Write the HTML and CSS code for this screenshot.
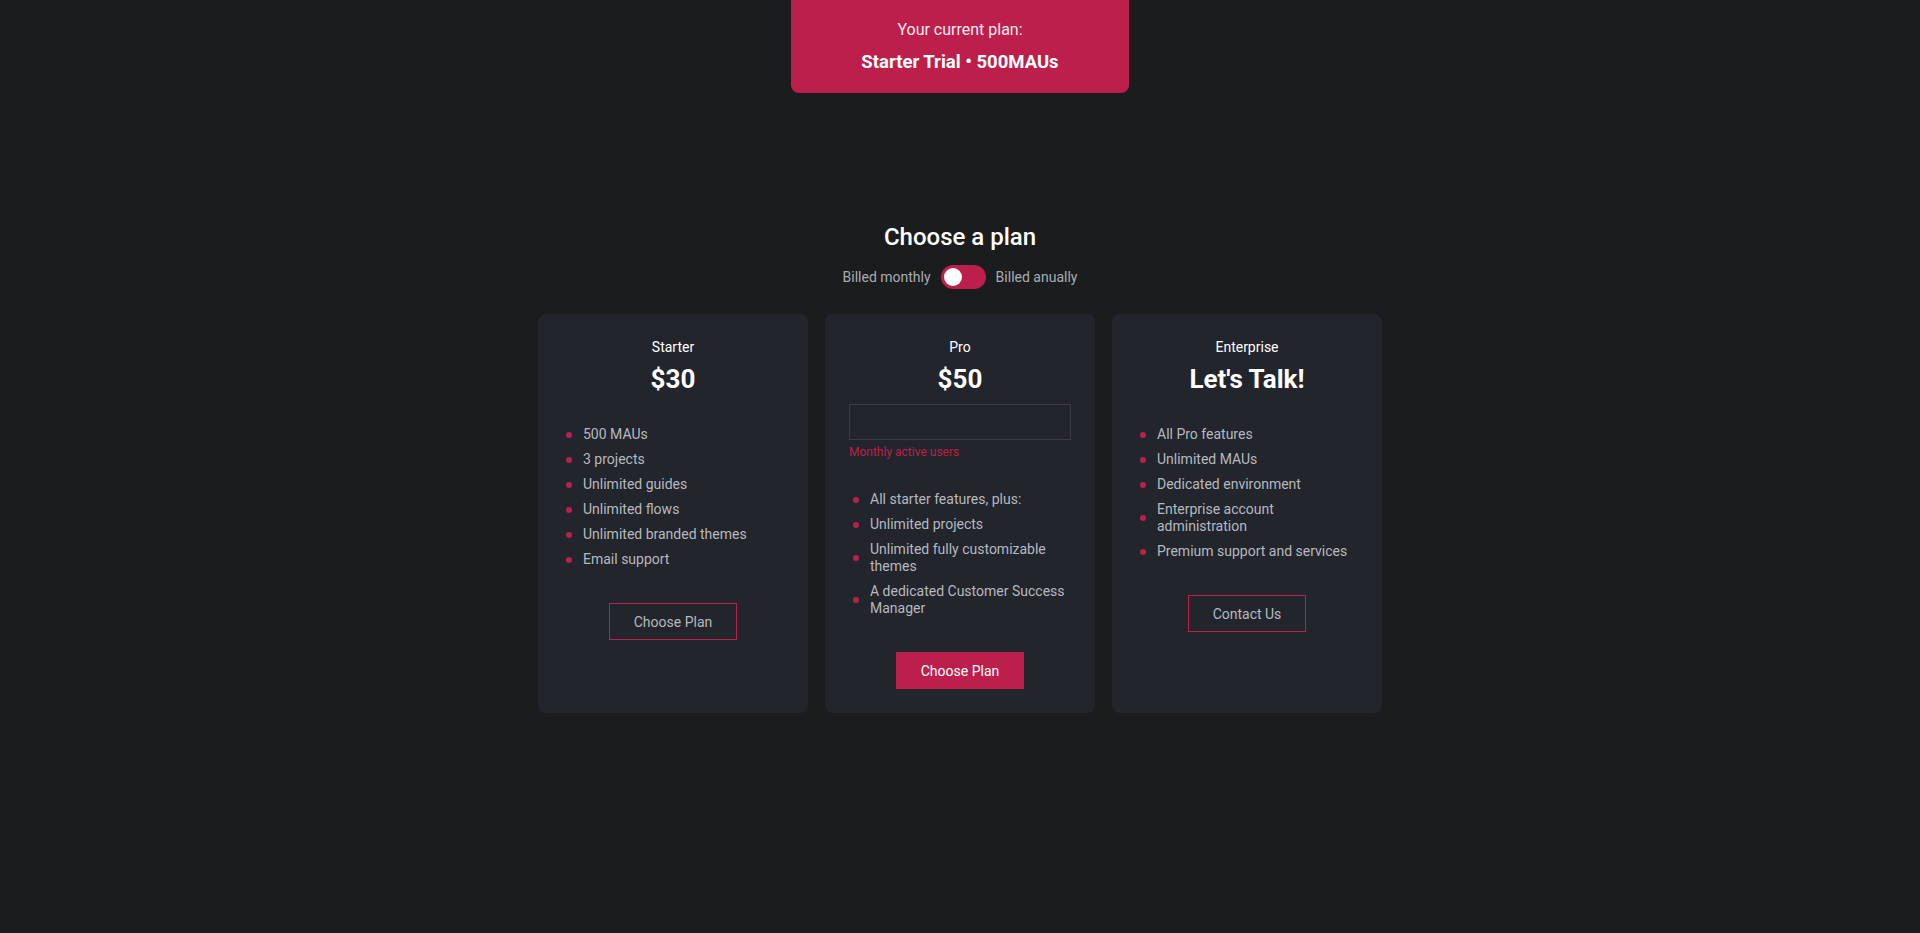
FILE: index.html
```html
<!DOCTYPE html>
<html lang="en">
<head>
<meta charset="utf-8">
<title>Plans</title>
<link rel="stylesheet" href="styles.css">
</head>
<body>
<div class="page">
  <div class="current-plan">
    <div class="current-label">Your current plan:</div>
    <div class="current-name">Starter Trial • 500MAUs</div>
  </div>

  <h1 class="heading">Choose a plan</h1>
  <div class="billing">
    <span class="billing-label">Billed monthly</span>
    <span class="toggle"><span class="knob"></span></span>
    <span class="billing-label">Billed anually</span>
  </div>

  <div class="cards">
    <div class="card">
      <div class="card-title">Starter</div>
      <div class="card-price">$30</div>
      <ul class="features">
        <li><span class="dot"></span><span>500 MAUs</span></li>
        <li><span class="dot"></span><span>3 projects</span></li>
        <li><span class="dot"></span><span>Unlimited guides</span></li>
        <li><span class="dot"></span><span>Unlimited flows</span></li>
        <li><span class="dot"></span><span>Unlimited branded themes</span></li>
        <li><span class="dot"></span><span>Email support</span></li>
      </ul>
      <button class="btn btn-outline">Choose Plan</button>
    </div>

    <div class="card">
      <div class="card-title">Pro</div>
      <div class="card-price">$50</div>
      <div class="mau-input"></div>
      <div class="mau-label">Monthly active users</div>
      <ul class="features">
        <li><span class="dot"></span><span>All starter features, plus:</span></li>
        <li><span class="dot"></span><span>Unlimited projects</span></li>
        <li><span class="dot"></span><span>Unlimited fully customizable themes</span></li>
        <li><span class="dot"></span><span>A dedicated Customer Success Manager</span></li>
      </ul>
      <button class="btn btn-filled">Choose Plan</button>
    </div>

    <div class="card">
      <div class="card-title">Enterprise</div>
      <div class="card-price">Let's Talk!</div>
      <ul class="features">
        <li><span class="dot"></span><span>All Pro features</span></li>
        <li><span class="dot"></span><span>Unlimited MAUs</span></li>
        <li><span class="dot"></span><span>Dedicated environment</span></li>
        <li><span class="dot"></span><span>Enterprise account administration</span></li>
        <li><span class="dot"></span><span>Premium support and services</span></li>
      </ul>
      <button class="btn btn-outline btn-contact">Contact Us</button>
    </div>
  </div>
</div>
</body>
</html>
```

FILE: styles.css
```css
html, body {
  margin: 0;
  padding: 0;
  background: #1b1c1e;
  font-family: Roboto, "Liberation Sans", Arial, sans-serif;
  color: #f2f2f2;
}

.page {
  display: flex;
  flex-direction: column;
  align-items: center;
  min-height: 933px;
}

.current-plan {
  width: 338px;
  box-sizing: border-box;
  background: #bc1f4c;
  border-radius: 0 0 8px 8px;
  padding: 20px 0 19px;
  text-align: center;
}

.current-label {
  font-size: 16px;
  line-height: 20px;
  color: #f6e9ed;
}

.current-name {
  margin-top: 10px;
  font-size: 18.5px;
  line-height: 24px;
  font-weight: 700;
  color: #ffffff;
}

.heading {
  margin: 129px 0 0;
  font-size: 24px;
  line-height: 30px;
  font-weight: 500;
  color: #ffffff;
}

.billing {
  margin-top: 13px;
  display: flex;
  align-items: center;
  gap: 10px;
}

.billing-label {
  font-size: 14px;
  color: #a9acb2;
}

.toggle {
  width: 45px;
  height: 24px;
  border-radius: 12px;
  background: #bc1f4c;
  display: flex;
  align-items: center;
  padding: 0 3px;
  box-sizing: border-box;
}

.knob {
  width: 18px;
  height: 18px;
  border-radius: 50%;
  background: #ffffff;
}

.cards {
  margin-top: 25px;
  display: flex;
  gap: 17px;
  align-items: stretch;
}

.card {
  width: 270px;
  box-sizing: border-box;
  background: #22252c;
  border-radius: 8px;
  padding: 23px 24px 24px;
  display: flex;
  flex-direction: column;
  align-items: center;
}

.card-title {
  font-size: 14px;
  line-height: 20px;
  font-weight: 400;
  color: #ffffff;
}

.card-price {
  margin-top: 6px;
  font-size: 26px;
  line-height: 32px;
  font-weight: 700;
  color: #ffffff;
}

.mau-input {
  margin-top: 9px;
  align-self: stretch;
  height: 36px;
  box-sizing: border-box;
  border: 1px solid #3a3c41;
}

.mau-label {
  align-self: stretch;
  margin-top: 4px;
  font-size: 12px;
  line-height: 16px;
  color: #bc1f4c;
}

.features {
  align-self: stretch;
  list-style: none;
  margin: 31px 0 0;
  padding: 0 0 0 4px;
  display: flex;
  flex-direction: column;
  gap: 8px;
}

.features li {
  display: flex;
  align-items: center;
  gap: 11px;
  font-size: 14px;
  line-height: 17px;
  color: #b6b9bf;
}

.dot {
  flex: none;
  width: 6px;
  height: 6px;
  border-radius: 50%;
  background: #bc1f4c;
}

.btn {
  margin-top: 35px;
  width: 128px;
  height: 37px;
  box-sizing: border-box;
  font-family: inherit;
  font-size: 14px;
  cursor: pointer;
}

.btn-outline {
  background: transparent;
  border: 1px solid #bc1f4c;
  color: #b6b9bf;
}

.btn-filled {
  background: #bc1f4c;
  border: none;
  color: #ffffff;
  font-weight: 400;
}

.btn-contact {
  width: 118px;
}
```
